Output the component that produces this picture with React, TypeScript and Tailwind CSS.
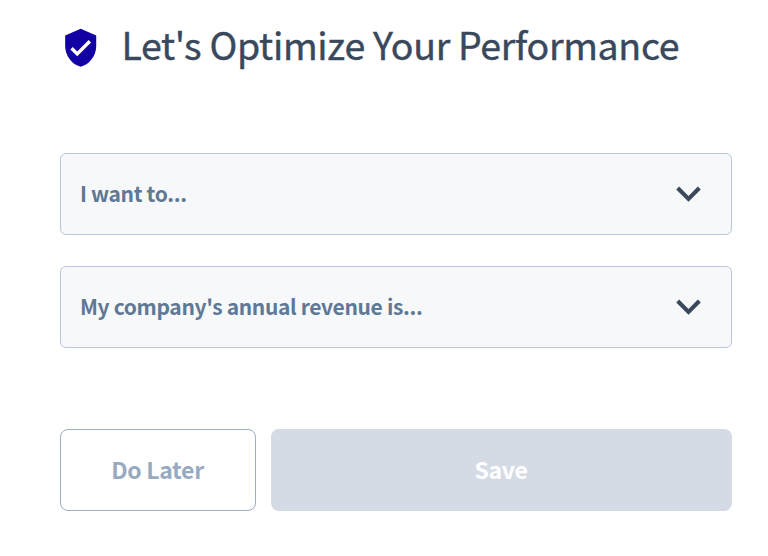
function ShieldIcon() {
  return (
    <svg viewBox="0 0 24 24" className="mt-[1px] h-[41.4px] w-[41.4px] shrink-0 fill-[#1200a4]" aria-hidden="true">
      <path d="M12 1 3 5v6c0 5.55 3.84 10.74 9 12 5.16-1.26 9-6.45 9-12V5l-9-4zm-2 16-4-4 1.41-1.41L10 14.17l6.59-6.59L18 9l-8 8z" />
    </svg>
  );
}

function ChevronIcon() {
  return (
    <svg viewBox="0 0 24 24" className="-mt-[2px] h-[49px] w-[49px] shrink-0 fill-[#3a485c]" aria-hidden="true">
      <path d="M16.59 8.59 12 13.17 7.41 8.59 6 10l6 6 6-6z" />
    </svg>
  );
}

function SelectField({ label }: { label: string }) {
  return (
    <button className="flex h-[82px] w-full items-center justify-between rounded-[6px] border border-[#bac7da] bg-[#f6f8fa] pl-[19px] pr-[18px] text-left">
      <span className="-mt-[2px] whitespace-nowrap text-[21px] font-bold leading-none tracking-[-0.35px] text-[#5f7895]">
        {label}
      </span>
      <ChevronIcon />
    </button>
  );
}

export default function App() {
  return (
    <main className="h-[556px] w-[768px] bg-white pl-[60px] pt-[22px] font-['Noto_Sans_CJK_SC',sans-serif]">
      <h1 className="flex h-[50px] items-center gap-[20px] text-[37.5px] leading-none tracking-[-0.32px] text-[#3a485c]">
        <ShieldIcon />
        <span className="-mt-[6px] whitespace-nowrap [-webkit-text-stroke:0.4px_#3a485c]">
          Let's Optimize Your Performance
        </span>
      </h1>
      <div className="mt-[81px] flex w-[672px] flex-col gap-[31px]">
        <SelectField label="I want to..." />
        <SelectField label="My company's annual revenue is..." />
      </div>
      <div className="mt-[81px] flex w-[672px] gap-[15px] text-[23px] font-bold tracking-[-0.3px]">
        <button className="h-[82px] w-[196px] rounded-lg border border-[#9aaec4] pb-[2px] pr-[1px] text-[#98aac0]">
          Do Later
        </button>
        <button className="h-[82px] flex-1 rounded-lg bg-[#d4dbe5] pb-[2px] pr-[1px] text-white">Save</button>
      </div>
    </main>
  );
}
